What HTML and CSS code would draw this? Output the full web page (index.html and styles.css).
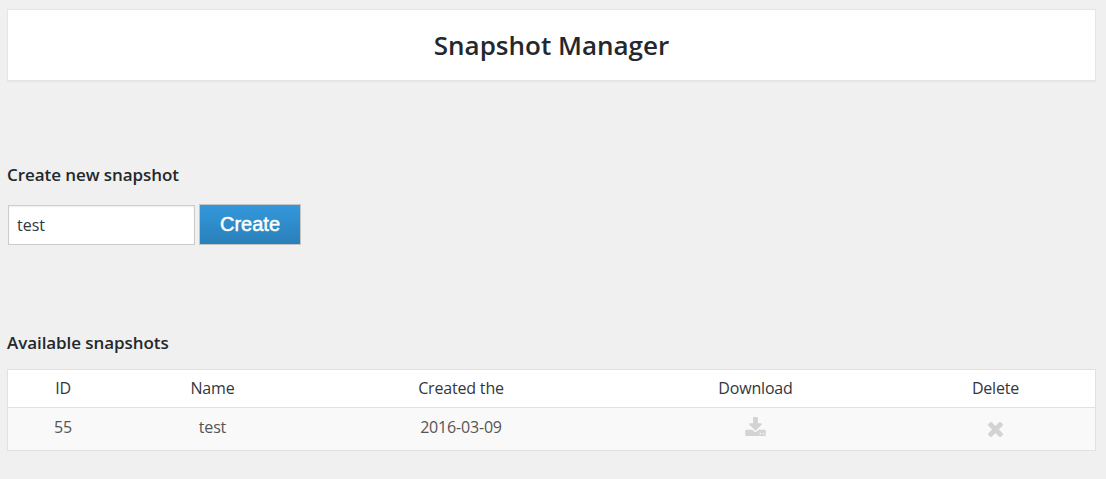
FILE: index.html
```html
<!DOCTYPE html>
<html lang="en">
<head>
<meta charset="utf-8">
<title>Snapshot Manager</title>
<link rel="stylesheet" href="styles.css">
</head>
<body>
<main class="page">
  <header class="banner"><h1 class="title">Snapshot Manager</h1></header>
  <h2 class="heading">Create new snapshot</h2>
  <form class="create-form">
    <input class="name-input" type="text" value="test">
    <button class="create-button" type="button">Create</button>
  </form>
  <h2 class="heading heading-list">Available snapshots</h2>
  <div class="table">
    <div class="row head"><span>ID</span><span>Name</span><span>Created the</span><span>Download</span><span>Delete</span></div>
    <div class="row"><span>55</span><span>test</span><span>2016-03-09</span>
      <span><svg class="icon download" viewBox="64 0 1664 1536"><path d="M1344 1344q0-26-19-45t-45-19-45 19-19 45 19 45 45 19 45-19 19-45zm256 0q0-26-19-45t-45-19-45 19-19 45 19 45 45 19 45-19 19-45zm128-224v320q0 40-28 68t-68 28h-1472q-40 0-68-28t-28-68v-320q0-40 28-68t68-28h465l135 136q58 56 136 56t136-56l136-136h464q40 0 68 28t28 68zm-325-569q17 41-14 70l-448 448q-18 19-45 19t-45-19l-448-448q-31-29-14-70 17-39 59-39h256v-448q0-26 19-45t45-19h256q26 0 45 19t19 45v448h256q42 0 59 39z"/></svg></span>
      <span><svg class="icon delete" viewBox="110 366 1188 1188"><path d="M1298 1322q0 40-28 68l-136 136q-28 28-68 28t-68-28l-294-294-294 294q-28 28-68 28t-68-28l-136-136q-28-28-28-68t28-68l294-294-294-294q-28-28-28-68t28-68l136-136q28-28 68-28t68 28l294 294 294-294q28-28 68-28t68 28l136 136q28 28 28 68t-28 68l-294 294 294 294q28 28 28 68z"/></svg></span>
    </div>
  </div>
</main>
</body>
</html>
```

FILE: styles.css
```css
* { box-sizing: border-box; }
body { margin: 0; background: #f0f0f0; color: #23282d; font-family: "Open Sans", sans-serif; }
.page { padding: 9px 10px 0 7px; }
.banner { height: 72px; display: flex; align-items: center; justify-content: center; background: #fff; border: 1px solid #e5e5e5; box-shadow: 0 1px 1px rgba(0,0,0,.04); }
.title { margin: 0; font-size: 26px; line-height: 36px; font-weight: 600; }
.heading { margin: 82px 0 0; font-size: 17px; line-height: 24px; font-weight: 600; letter-spacing: -.07px; }
.create-form { display: flex; gap: 4px; margin: 17px 0 0 1px; }
.name-input { width: 187px; height: 40px; margin-top: 1px; padding: 0 8px; border: 1px solid #ccc; background: #fff; color: #32373c; font: 16px "Open Sans", sans-serif; box-shadow: inset 0 1px 2px rgba(0,0,0,.07); }
.create-button { width: 102px; height: 41px; padding: 0 0 1px; border: 1px solid #c4c4c4; background: linear-gradient(#3498db, #2980b9); color: #fff; font: 20px "Liberation Sans", sans-serif; -webkit-text-stroke: .5px #fff; }
.heading-list { margin-top: 86px; }
.table { margin-top: 14px; border: 1px solid #e1e1e1; background: #f9f9f9; box-shadow: 0 1px 1px rgba(0,0,0,.04); }
.row { display: grid; grid-template-columns: 110px 189px 308px 281px 1fr; height: 42px; color: #555; font-size: 16px; line-height: 38px; letter-spacing: -.18px; text-align: center; }
.head { height: 38px; line-height: 37px; background: #fff; color: #32373c; border-bottom: 1px solid #e1e1e1; }
.row span { display: flex; justify-content: center; }
.icon { display: block; fill: #d3d3d3; }
.download { width: 21px; height: 19px; margin: 9px 0 0 0; }
.delete { width: 15px; height: 15px; margin: 14px 1px 0 0; }
```
